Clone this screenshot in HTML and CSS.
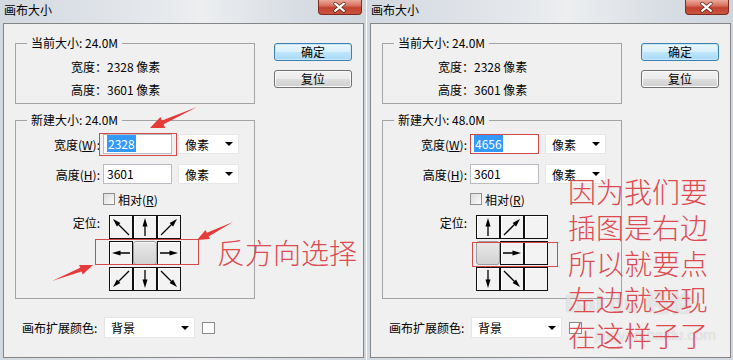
FILE: index.html
```html
<!DOCTYPE html>
<html lang="zh-CN">
<head>
<meta charset="utf-8">
<title>画布大小</title>
<link rel="stylesheet" href="styles.css">
</head>
<body>
<div class="screen">

  <div class="dialog">
    <div class="titlebar">
      <span class="title">画布大小</span>
      <span class="close"><svg width="44" height="15" viewBox="0 0 44 15"><path d="M17.5 3.5 L26.5 11 M26.5 3.5 L17.5 11" stroke="#5b2017" stroke-width="3.6" stroke-linecap="round"/><path d="M17.5 3.5 L26.5 11 M26.5 3.5 L17.5 11" stroke="#fff" stroke-width="2.2" stroke-linecap="round"/></svg></span>
    </div>
    <div class="content">
      <div class="top">
        <div class="groups">
          <fieldset class="group">
            <legend>当前大小: 24.0M</legend>
            <div class="info">
              <div>宽度：2328 像素</div>
              <div>高度：3601 像素</div>
            </div>
          </fieldset>
          <fieldset class="group group-new">
            <legend>新建大小: 24.0M</legend>
            <div class="form">
              <div class="row"><span class="label">宽度(<u>W</u>):</span><div class="field"><span class="sel">2328</span></div><div class="select">像素<span class="caret"></span></div></div>
              <div class="row"><span class="label">高度(<u>H</u>):</span><div class="field">3601</div><div class="select">像素<span class="caret"></span></div></div>
              <div class="check-row"><span class="checkbox"></span><span>相对(<u>R</u>)</span></div>
              <div class="anchor-row">
                <span class="label">定位:</span>
                <div class="grid">
                  <div class="cell"><svg class="arr rot270" viewBox="0 0 22 22"><line x1="3" y1="19" x2="14" y2="8"/><polygon points="19,3 15.1,10.4 11.6,6.9"/></svg></div>
                  <div class="cell"><svg class="arr" viewBox="0 0 22 22"><line x1="11" y1="20" x2="11" y2="8"/><polygon points="11,2 8.5,10.5 13.5,10.5"/></svg></div>
                  <div class="cell"><svg class="arr" viewBox="0 0 22 22"><line x1="3" y1="19" x2="14" y2="8"/><polygon points="19,3 15.1,10.4 11.6,6.9"/></svg></div>
                  <div class="cell"><svg class="arr rot270" viewBox="0 0 22 22"><line x1="11" y1="20" x2="11" y2="8"/><polygon points="11,2 8.5,10.5 13.5,10.5"/></svg></div>
                  <div class="cell cell-on"></div>
                  <div class="cell"><svg class="arr rot90" viewBox="0 0 22 22"><line x1="11" y1="20" x2="11" y2="8"/><polygon points="11,2 8.5,10.5 13.5,10.5"/></svg></div>
                  <div class="cell"><svg class="arr rot180" viewBox="0 0 22 22"><line x1="3" y1="19" x2="14" y2="8"/><polygon points="19,3 15.1,10.4 11.6,6.9"/></svg></div>
                  <div class="cell"><svg class="arr rot180" viewBox="0 0 22 22"><line x1="11" y1="20" x2="11" y2="8"/><polygon points="11,2 8.5,10.5 13.5,10.5"/></svg></div>
                  <div class="cell"><svg class="arr rot90" viewBox="0 0 22 22"><line x1="3" y1="19" x2="14" y2="8"/><polygon points="19,3 15.1,10.4 11.6,6.9"/></svg></div>
                </div>
              </div>
            </div>
          </fieldset>
        </div>
        <div class="buttons">
          <div class="btn btn-default">确定</div>
          <div class="btn">复位</div>
        </div>
      </div>
      <div class="bottom">
        <span class="bottom-label">画布扩展颜色:</span>
        <div class="select select-wide">背景<span class="caret"></span></div>
        <span class="swatch"></span>
      </div>
    </div>

    <div class="annot-rect rect-l-input"></div>
    <div class="annot-rect rect-l-row"></div>
    <svg class="annot-arrows" width="366" height="360" viewBox="0 0 366 360">
      <polygon points="197,107 162.0,120.6 160.4,116.9 150,128 165.2,127.9 163.6,124.2"/>
      <polygon points="233,222 206.8,232.8 205.5,230.1 197,240 209.9,239.1 208.6,236.4"/>
      <polygon points="52,281 81.6,271.6 82.7,274.4 93,265 79.1,265.0 80.2,267.8"/>
    </svg>
    <div class="annot-text text-left">反方向选择</div>
  </div>

  <div class="dialog">
    <div class="titlebar">
      <span class="title">画布大小</span>
      <span class="close"><svg width="44" height="15" viewBox="0 0 44 15"><path d="M17.5 3.5 L26.5 11 M26.5 3.5 L17.5 11" stroke="#5b2017" stroke-width="3.6" stroke-linecap="round"/><path d="M17.5 3.5 L26.5 11 M26.5 3.5 L17.5 11" stroke="#fff" stroke-width="2.2" stroke-linecap="round"/></svg></span>
    </div>
    <div class="content">
      <div class="top">
        <div class="groups">
          <fieldset class="group">
            <legend>当前大小: 24.0M</legend>
            <div class="info">
              <div>宽度：2328 像素</div>
              <div>高度：3601 像素</div>
            </div>
          </fieldset>
          <fieldset class="group group-new">
            <legend>新建大小: 48.0M</legend>
            <div class="form">
              <div class="row"><span class="label">宽度(<u>W</u>):</span><div class="field field-red"><span class="sel">4656</span></div><div class="select">像素<span class="caret"></span></div></div>
              <div class="row"><span class="label">高度(<u>H</u>):</span><div class="field">3601</div><div class="select">像素<span class="caret"></span></div></div>
              <div class="check-row"><span class="checkbox"></span><span>相对(<u>R</u>)</span></div>
              <div class="anchor-row">
                <span class="label">定位:</span>
                <div class="grid">
                  <div class="cell"><svg class="arr" viewBox="0 0 22 22"><line x1="11" y1="20" x2="11" y2="8"/><polygon points="11,2 8.5,10.5 13.5,10.5"/></svg></div>
                  <div class="cell"><svg class="arr" viewBox="0 0 22 22"><line x1="3" y1="19" x2="14" y2="8"/><polygon points="19,3 15.1,10.4 11.6,6.9"/></svg></div>
                  <div class="cell"></div>
                  <div class="cell cell-on"></div>
                  <div class="cell"><svg class="arr rot90" viewBox="0 0 22 22"><line x1="11" y1="20" x2="11" y2="8"/><polygon points="11,2 8.5,10.5 13.5,10.5"/></svg></div>
                  <div class="cell"></div>
                  <div class="cell"><svg class="arr rot180" viewBox="0 0 22 22"><line x1="11" y1="20" x2="11" y2="8"/><polygon points="11,2 8.5,10.5 13.5,10.5"/></svg></div>
                  <div class="cell"><svg class="arr rot90" viewBox="0 0 22 22"><line x1="3" y1="19" x2="14" y2="8"/><polygon points="19,3 15.1,10.4 11.6,6.9"/></svg></div>
                  <div class="cell"></div>
                </div>
              </div>
            </div>
          </fieldset>
        </div>
        <div class="buttons">
          <div class="btn btn-default">确定</div>
          <div class="btn">复位</div>
        </div>
      </div>
      <div class="bottom">
        <span class="bottom-label">画布扩展颜色:</span>
        <div class="select select-wide">背景<span class="caret"></span></div>
        <span class="swatch"></span>
      </div>
    </div>

    <div class="annot-rect rect-r-row"></div>
    <div class="watermark">Bai du 经验<br><span class="wm-url">jingyan.baidu.com</span></div>
    <div class="annot-text text-right">因为我们要<br>插图是右边<br>所以就要点<br>左边就变现<br>在这样子了</div>
  </div>

</div>
</body>
</html>
```

FILE: styles.css
```css
* { box-sizing: border-box; }

html, body {
  margin: 0;
  padding: 0;
}

body {
  width: 733px;
  height: 360px;
  overflow: hidden;
  background: #ffffff;
  font-family: "Noto Sans CJK SC", "Liberation Sans", sans-serif;
  font-size: 12px;
  color: #000;
}

.screen {
  display: flex;
  gap: 1px;
}

.dialog {
  position: relative;
  width: 366px;
  height: 360px;
  display: flex;
  flex-direction: column;
  background: linear-gradient(to right, #d3d9e0 0%, #e4e7eb 40%, #eceef0 55%, #d9dee4 80%, #cfd6de 100%);
}

.titlebar {
  height: 23px;
  display: flex;
  align-items: flex-start;
  padding-left: 4px;
}

.title {
  line-height: 20px;
  font-size: 12px;
  color: #000;
}

.close {
  margin-left: auto;
  margin-right: 4px;
  width: 44px;
  height: 15px;
  border: 1px solid #7e2b22;
  border-top: none;
  border-radius: 0 0 4px 4px;
  background: linear-gradient(#e9a89a 0%, #d8715f 40%, #c2422e 55%, #c9553e 100%);
  display: flex;
}

.close svg {
  margin-left: -1px;
}

.content {
  flex: 1;
  margin: 0 2px 2px 3px;
  border: 1px solid #858585;
  background: #f0f0f0;
  padding: 11px 0 0 11px;
}

.top {
  display: flex;
}

.groups {
  width: 240px;
}

.group {
  margin: 0;
  padding: 0;
  border: 1px solid #a3a3a3;
  min-width: 0;
}

.group legend {
  margin-left: 11px;
  padding: 0 4px;
  line-height: 16px;
}

.group-new {
  margin-top: 8px;
}

.info {
  padding: 4px 0 2px 55px;
  line-height: 23px;
}

.form {
  padding: 6px 0 7px 0;
}

.row {
  display: flex;
  align-items: center;
  height: 20px;
}

.row + .row {
  margin-top: 10px;
}

.label {
  width: 84px;
  text-align: right;
  flex: none;
}

.field {
  margin-left: 3px;
  width: 69px;
  height: 20px;
  border: 1px solid #b9bcc2;
  background: #fff;
  padding-left: 3px;
  line-height: 18px;
}

.field-red {
  border-color: #d24a4a;
}

.sel {
  background: #3399ff;
  color: #fff;
  padding: 0 1px;
}

.select {
  margin-left: 6px;
  width: 61px;
  height: 20px;
  background: #fff;
  border: 1px solid #e6e6e6;
  display: flex;
  align-items: center;
  justify-content: space-between;
  padding: 0 5px 0 6px;
}

.caret {
  width: 0;
  height: 0;
  border-left: 4px solid transparent;
  border-right: 4px solid transparent;
  border-top: 4px solid #000;
}

.check-row {
  margin-top: 7px;
  height: 16px;
  padding-left: 87px;
  display: flex;
  align-items: center;
  gap: 3px;
}

.checkbox {
  width: 12px;
  height: 12px;
  border: 1px solid #8e8f8f;
  background: linear-gradient(135deg, #dcdcdc, #fbfbfb);
}

.anchor-row {
  margin-top: 8px;
  display: flex;
  align-items: flex-start;
}

.anchor-row .label {
  line-height: 16px;
}

.grid {
  margin-left: 9px;
  display: grid;
  grid-template-columns: repeat(3, 24px);
  grid-template-rows: repeat(3, 24px);
  row-gap: 2px;
}

.cell {
  border: 1px solid #101010;
  background: #f3f3f3;
  box-shadow: inset 1px 1px 0 #ffffff;
  display: flex;
  align-items: center;
  justify-content: center;
}

.cell-on {
  border: 1px solid #9b9b9b;
  border-radius: 3px;
  background: linear-gradient(#e9e9e9, #d2d2d2);
  box-shadow: inset 0 1px 0 #f6f6f6;
}

.arr {
  width: 22px;
  height: 22px;
}

.arr line {
  stroke: #000;
  stroke-width: 1.3;
}

.arr polygon {
  fill: #000;
}

.rot90 { transform: rotate(90deg); }
.rot180 { transform: rotate(180deg); }
.rot270 { transform: rotate(270deg); }

.buttons {
  margin-left: 19px;
  margin-top: 8px;
  display: flex;
  flex-direction: column;
  gap: 9px;
}

.btn {
  width: 78px;
  height: 18px;
  line-height: 16px;
  text-align: center;
  border: 1px solid #707070;
  border-radius: 3px;
  background: linear-gradient(#f2f2f2 0%, #ebebeb 50%, #dddddd 51%, #cfcfcf 100%);
  box-shadow: inset 0 0 0 1px #fcfcfc;
}

.btn-default {
  border-color: #3c7fb1;
  background: linear-gradient(#eaf6fd 0%, #d9f0fc 50%, #bee6fd 51%, #a7d9f5 100%);
  box-shadow: inset 0 0 0 1px #c8e8fa;
}

.bottom {
  margin-top: 18px;
  height: 21px;
  display: flex;
  align-items: center;
  padding-left: 7px;
}

.bottom-label {
  width: 82px;
}

.select-wide {
  margin-left: 0;
  width: 91px;
  height: 21px;
}

.swatch {
  margin-left: 7px;
  width: 13px;
  height: 12px;
  border: 1px solid #8a8a8a;
  background: #fff;
}

/* annotations */
.annot-rect {
  position: absolute;
  border: 1px solid #d24a4a;
}

.rect-l-input { left: 99px; top: 133px; width: 78px; height: 23px; }
.rect-l-row { left: 95px; top: 239px; width: 104px; height: 26px; }
.rect-r-row { left: 105px; top: 242px; width: 86px; height: 25px; }

.annot-arrows {
  position: absolute;
  left: 0;
  top: 0;
  pointer-events: none;
}

.annot-arrows polygon {
  fill: #e53b3b;
}

.annot-text {
  position: absolute;
  color: #dd4b50;
  font-size: 28px;
  font-weight: 300;
  white-space: nowrap;
}

.text-left {
  left: 217px;
  top: 235px;
  line-height: 34px;
}

.text-right {
  left: 201px;
  top: 173px;
  line-height: 36px;
}

.watermark {
  position: absolute;
  left: 198px;
  top: 290px;
  color: rgba(255, 255, 255, 0.6);
  text-shadow: 0 0 1px rgba(0, 0, 0, 0.22);
  font-family: "Liberation Sans", "Noto Sans CJK SC", sans-serif;
  font-size: 24px;
  font-weight: 700;
  line-height: 28px;
  white-space: nowrap;
}

.wm-url {
  margin-left: 30px;
  font-size: 15px;
  font-weight: 400;
  line-height: 18px;
}
```
